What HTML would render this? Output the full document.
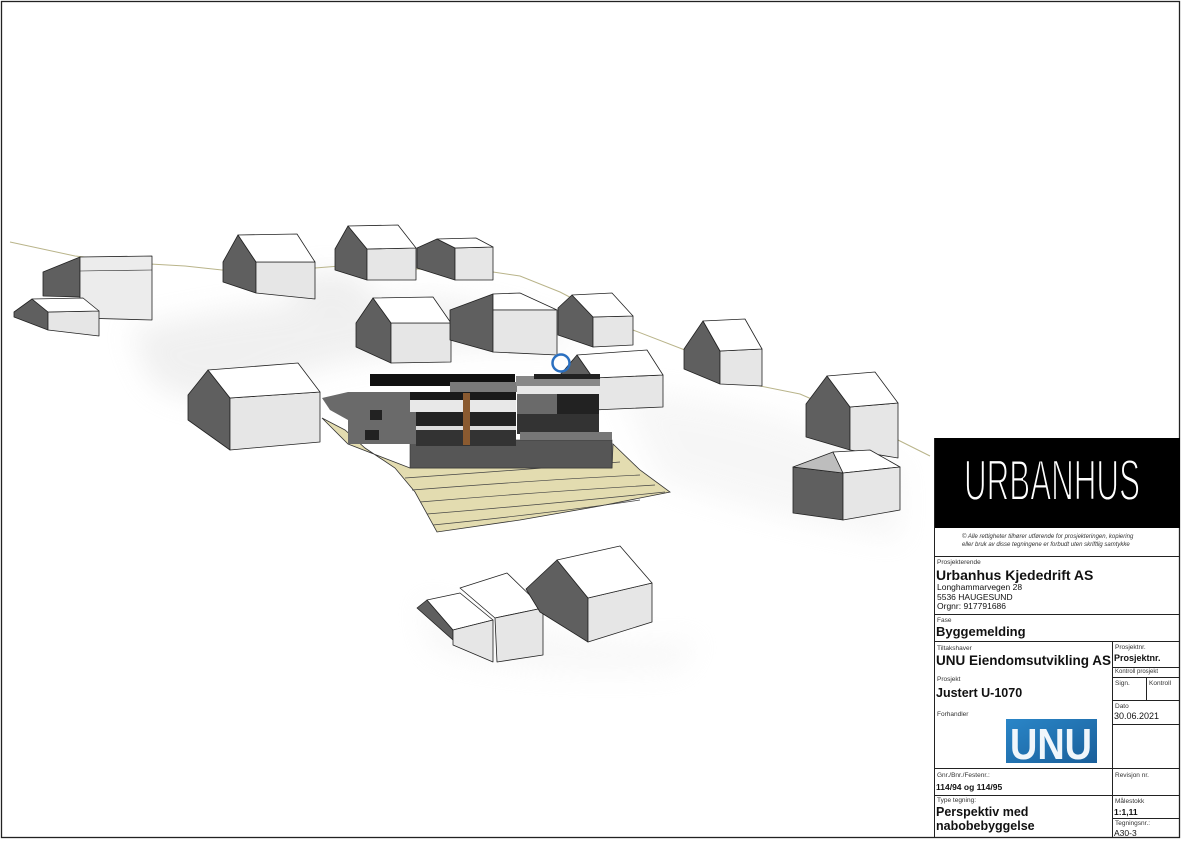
<!DOCTYPE html>
<html><head><meta charset="utf-8"><style>
body{margin:0;width:1182px;height:843px;background:#fff;position:relative;overflow:hidden;font-family:"Liberation Sans",Arial,sans-serif;color:#111}
.a{position:absolute}
.l{position:absolute;background:#222}
.s{font-size:6.5px;color:#333}
.b{font-weight:bold}
</style></head><body>
<svg class="a" style="left:0;top:0" width="1182" height="843" viewBox="0 0 1182 843">
<defs>
<filter id="bl" x="-50%" y="-50%" width="200%" height="200%"><feGaussianBlur stdDeviation="14"/></filter>
<linearGradient id="ub" x1="0" y1="0" x2="1" y2="1"><stop offset="0" stop-color="#2a86c8"/><stop offset="1" stop-color="#1a5f9a"/></linearGradient>
</defs>
<rect x="1.5" y="1.5" width="1178" height="836" fill="#fff" stroke="#222" stroke-width="1.3"/>
<g filter="url(#bl)" opacity="0.3">
<path d="M130 330 Q300 290 450 300 Q600 330 560 345 Q400 340 280 380 Q200 420 150 380Z" fill="#cfcfcf"/>
<path d="M620 390 Q780 400 900 470 L900 540 Q780 520 660 480Z" fill="#e4e4e4"/>
<ellipse cx="330" cy="290" rx="40" ry="18" fill="#c8c8c8"/>
<path d="M420 600 Q600 650 700 640 L680 670 Q520 680 430 650Z" fill="#e8e8e8"/>
</g>
<polyline points="10,242 75,256 150,264 185,266 222,270 315,268 340,266 493,272 520,276 560,292 633,330 690,352 760,386 800,394 860,420 898,440 930,456" fill="none" stroke="#b9b48a" stroke-width="1"/>
<path d="M322,418 345,430 365,448 395,468 415,492 437,532 520,520 600,506 670,492 640,470 613,444 612,468 410,468 348,444Z" fill="#e3dcb0" stroke="#333" stroke-width="0.8"/>
<g fill="none" stroke="#444" stroke-width="0.7">
<path d="M405 478 Q520 470 620 462"/><path d="M412 490 Q540 480 640 475"/><path d="M420 502 Q540 492 655 485"/><path d="M427 514 Q550 504 665 492"/><path d="M433 525 Q560 512 640 500"/>
</g>
<g stroke="#222" stroke-width="0.8" stroke-linejoin="round">
<polygon points="43,272 80,257 80,297 43,296" fill="#5f5f5f"/>
<polygon points="80,257 152,256 152,320 80,318" fill="#ececec"/>
<line x1="80" y1="271" x2="152" y2="270" stroke-width="0.6"/>
<polygon points="14,312 32,299 48,312 48,330 14,317" fill="#5f5f5f"/>
<polygon points="48,312 99,311 99,336 48,330" fill="#e6e6e6"/>
<polygon points="32,299 83,298 99,311 48,312" fill="#fff"/>
<polygon points="223,262 238,235 256,262 256,293 223,282" fill="#5f5f5f"/>
<polygon points="256,262 315,262 315,299 256,293" fill="#e6e6e6"/>
<polygon points="238,235 297,234 315,262 256,262" fill="#fff"/>
<polygon points="335,249 348,226 367,249 367,280 335,270" fill="#5f5f5f"/>
<polygon points="367,249 416,248 416,280 367,280" fill="#e6e6e6"/>
<polygon points="348,226 398,225 416,248 367,249" fill="#fff"/>
<polygon points="417,248 437,239 455,248 455,280 417,268" fill="#5f5f5f"/>
<polygon points="455,248 493,247 493,280 455,280" fill="#e6e6e6"/>
<polygon points="437,239 476,238 493,247 455,248" fill="#fff"/>
<polygon points="558,308 572,295 593,317 593,347 558,335" fill="#5f5f5f"/>
<polygon points="593,317 633,316 633,345 593,347" fill="#e6e6e6"/>
<polygon points="572,295 612,293 633,316 593,317" fill="#fff"/>
<polygon points="356,323 373,298 391,323 391,363 356,347" fill="#5f5f5f"/>
<polygon points="391,323 451,323 451,362 391,363" fill="#e6e6e6"/>
<polygon points="373,298 433,297 451,323 391,323" fill="#fff"/>
<polygon points="450,310 493,294 493,352 450,340" fill="#5f5f5f"/>
<polygon points="493,294 520,293 557,310 493,310" fill="#fff"/>
<polygon points="493,310 557,310 557,355 493,352" fill="#e6e6e6"/>
<polygon points="560,375 577,355 593,378 593,410 560,400" fill="#5f5f5f"/>
<polygon points="593,378 663,375 663,407 593,410" fill="#e6e6e6"/>
<polygon points="577,355 647,350 663,375 593,378" fill="#fff"/>
<polygon points="684,349 703,321 720,351 720,384 684,369" fill="#5f5f5f"/>
<polygon points="720,351 762,349 762,386 720,384" fill="#e6e6e6"/>
<polygon points="703,321 745,319 762,349 720,351" fill="#fff"/>
<polygon points="188,395 208,370 230,398 230,450 188,420" fill="#5f5f5f"/>
<polygon points="230,398 320,392 320,442 230,450" fill="#e6e6e6"/>
<polygon points="208,370 298,363 320,392 230,398" fill="#fff"/>
<polygon points="806,404 827,376 850,407 850,450 806,437" fill="#5f5f5f"/>
<polygon points="850,407 898,403 898,458 850,450" fill="#e6e6e6"/>
<polygon points="827,376 875,372 898,403 850,407" fill="#fff"/>
<polygon points="793,467 843,473 843,520 793,513" fill="#5f5f5f"/>
<polygon points="793,467 833,452 843,473" fill="#bdbdbd"/>
<polygon points="833,452 870,450 900,467 843,473" fill="#fff"/>
<polygon points="843,473 900,467 900,510 843,520" fill="#e6e6e6"/>
<polygon points="417,608 427,600 453,630 453,640" fill="#5f5f5f"/>
<polygon points="427,600 460,593 493,620 453,630" fill="#fff"/>
<polygon points="460,588 507,573 543,608 495,618" fill="#fff"/>
<polygon points="453,630 493,620 493,662 453,645" fill="#e6e6e6"/>
<polygon points="495,618 543,608 543,655 497,662" fill="#e6e6e6"/>
<polygon points="526,589 557,560 588,598 588,642 540,612" fill="#5f5f5f"/>
<polygon points="588,598 652,583 652,622 588,642" fill="#e6e6e6"/>
<polygon points="557,560 620,546 652,583 588,598" fill="#fff"/>
</g>
<g>
<polygon points="322,398 348,392 348,420 330,410" fill="#6a6a6a"/>
<rect x="410" y="440" width="202" height="28" fill="#565656" stroke="#333" stroke-width="0.6"/>
<rect x="370" y="374" width="145" height="12" fill="#111"/>
<rect x="450" y="382" width="68" height="10" fill="#7a7a7a"/>
<rect x="348" y="392" width="120" height="52" fill="#6a6a6a"/>
<rect x="410" y="392" width="106" height="10" fill="#1a1a1a"/>
<rect x="410" y="400" width="106" height="12" fill="#e8e8e8"/>
<rect x="416" y="412" width="100" height="16" fill="#222"/>
<rect x="416" y="426" width="100" height="4" fill="#ddd"/>
<rect x="416" y="430" width="100" height="16" fill="#333"/>
<rect x="463" y="393" width="7" height="52" fill="#8a5a30"/>
<rect x="370" y="410" width="12" height="10" fill="#222"/>
<rect x="365" y="430" width="14" height="10" fill="#222"/>
<rect x="516" y="376" width="84" height="10" fill="#888"/>
<rect x="534" y="374" width="66" height="5" fill="#222"/>
<rect x="517" y="386" width="82" height="8" fill="#e8e8e8"/>
<rect x="517" y="394" width="40" height="38" fill="#6a6a6a"/>
<rect x="557" y="394" width="42" height="20" fill="#222"/>
<rect x="517" y="414" width="82" height="20" fill="#333"/>
<rect x="520" y="432" width="92" height="8" fill="#777"/>
</g>
<circle cx="561" cy="363" r="8.5" fill="none" stroke="#2a6fc0" stroke-width="2.5"/>
<rect x="934" y="438" width="246" height="90" fill="#000"/>
<text x="0" y="0" transform="translate(964 500) scale(1 1.25)" fill="#fff" font-family="Liberation Sans Narrow, Liberation Sans, sans-serif" font-size="46" textLength="176" lengthAdjust="spacingAndGlyphs" stroke="#000" stroke-width="1.5">URBANHUS</text>
<rect x="1006" y="719" width="91" height="44" fill="url(#ub)"/>
<text x="1051" y="759" fill="#f0f6fb" font-weight="bold" font-size="44" text-anchor="middle" textLength="82" lengthAdjust="spacingAndGlyphs">UNU</text>
</svg>
<div class="l" style="left:934px;top:438px;width:1px;height:400px"></div>
<div class="l" style="left:934px;top:556px;width:246px;height:1px"></div>
<div class="l" style="left:934px;top:614px;width:246px;height:1px"></div>
<div class="l" style="left:934px;top:641px;width:246px;height:1px"></div>
<div class="l" style="left:1112px;top:641px;width:1px;height:197px"></div>
<div class="l" style="left:1112px;top:667px;width:68px;height:1px"></div>
<div class="l" style="left:1112px;top:677px;width:68px;height:1px"></div>
<div class="l" style="left:1146px;top:677px;width:1px;height:23px"></div>
<div class="l" style="left:1112px;top:700px;width:68px;height:1px"></div>
<div class="l" style="left:1112px;top:724px;width:68px;height:1px"></div>
<div class="l" style="left:934px;top:768px;width:246px;height:1px"></div>
<div class="l" style="left:934px;top:795px;width:246px;height:1px"></div>
<div class="l" style="left:1112px;top:818px;width:68px;height:1px"></div>
<div class="a" style="left:962px;top:533px;font-size:6px;font-style:italic;line-height:8px;color:#333">© Alle rettigheter tilhører utførende for prosjekteringen, kopiering<br>eller bruk av disse tegningene er forbudt uten skriftlig samtykke</div>
<div class="a s" style="left:937px;top:559px">Prosjekterende</div>
<div class="a b" style="left:936px;top:567px;font-size:14px">Urbanhus Kjededrift AS</div>
<div class="a" style="left:937px;top:583px;font-size:8.5px;line-height:9.5px">Longhammarvegen 28<br>5536 HAUGESUND<br>Orgnr: 917791686</div>
<div class="a s" style="left:937px;top:617px">Fase</div>
<div class="a b" style="left:936px;top:624px;font-size:13px">Byggemelding</div>
<div class="a s" style="left:937px;top:645px">Tiltakshaver</div>
<div class="a b" style="left:936px;top:653px;font-size:13.5px">UNU Eiendomsutvikling AS</div>
<div class="a s" style="left:937px;top:676px">Prosjekt</div>
<div class="a b" style="left:936px;top:686px;font-size:12.5px">Justert U-1070</div>
<div class="a s" style="left:937px;top:711px">Forhandler</div>
<div class="a s" style="left:1115px;top:644px">Prosjektnr.</div>
<div class="a b" style="left:1114px;top:653px;font-size:9px">Prosjektnr.</div>
<div class="a s" style="left:1115px;top:669px;font-size:6px">Kontroll prosjekt</div>
<div class="a s" style="left:1115px;top:680px">Sign.</div>
<div class="a s" style="left:1149px;top:680px">Kontroll</div>
<div class="a s" style="left:1115px;top:703px">Dato</div>
<div class="a" style="left:1114px;top:711px;font-size:9px">30.06.2021</div>
<div class="a s" style="left:937px;top:772px">Gnr./Bnr./Festenr.:</div>
<div class="a b" style="left:936px;top:782px;font-size:8.5px">114/94 og 114/95</div>
<div class="a s" style="left:1115px;top:772px">Revisjon nr.</div>
<div class="a s" style="left:937px;top:797px">Type tegning:</div>
<div class="a b" style="left:936px;top:805px;font-size:12.5px;line-height:14px">Perspektiv med<br>nabobebyggelse</div>
<div class="a s" style="left:1115px;top:798px">Målestokk</div>
<div class="a b" style="left:1114px;top:807px;font-size:8.5px">1:1,11</div>
<div class="a s" style="left:1115px;top:820px">Tegningsnr.:</div>
<div class="a" style="left:1114px;top:828px;font-size:8.5px">A30-3</div>
</body></html>
